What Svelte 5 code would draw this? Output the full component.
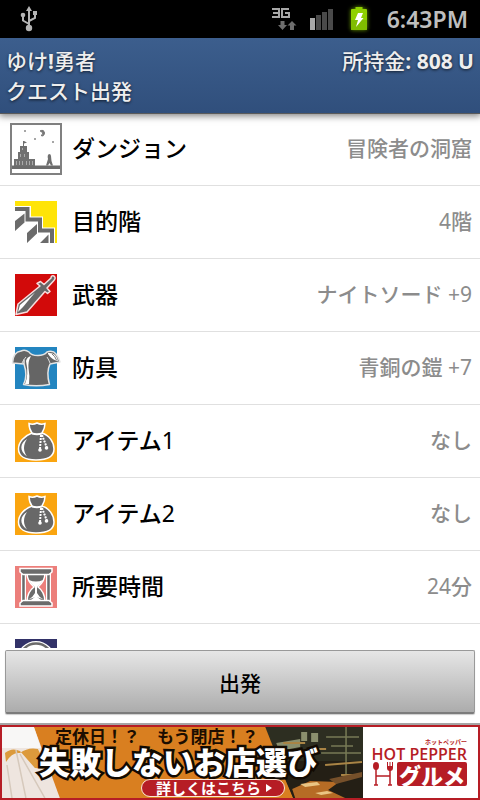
<script>
  let money = 808;

  let rows = [
    { icon: "dungeon", label: "ダンジョン", value: "冒険者の洞窟" },
    { icon: "stairs", label: "目的階", value: "4階" },
    { icon: "sword", label: "武器", value: "ナイトソード +9" },
    { icon: "armor", label: "防具", value: "青銅の鎧 +7" },
    { icon: "bag", label: "アイテム1", value: "なし" },
    { icon: "bag", label: "アイテム2", value: "なし" },
    { icon: "hourglass", label: "所要時間", value: "24分" },
    { icon: "clock", label: "", value: "" },
  ];

  const tiles = {
    stairs: "#ffe408",
    sword: "#d20a0a",
    armor: "#2385c0",
    bag: "#faa510",
    hourglass: "#ec7f7b",
    clock: "#323268",
  };

  // odd parts are the latin runs, they are set lighter than the kana and kanji
  function parts(text) {
    return text.split(/([ -~]+)/);
  }
</script>

{#snippet mixed(text)}
  {#each parts(text) as part, i}{#if i % 2}<span class="latin">{part}</span>{:else}{part}{/if}{/each}
{/snippet}

<div class="screen">
  <div class="status">
    <svg class="usb" width="18" height="26" viewBox="0 0 18 26">
      <path d="M9 3V22M9 18L3 14.500V9M9 15L15 12V7" fill="none" stroke="#b4b4b4" stroke-width="2" />
      <path d="M9 0L12 5H6Z" fill="#b4b4b4" />
      <circle cx="9" cy="22" r="3.200" fill="#b4b4b4" />
      <circle cx="3" cy="9" r="2.300" fill="#b4b4b4" />
      <rect x="13" y="5" width="4" height="4" fill="#b4b4b4" />
    </svg>
    <svg width="26" height="24" viewBox="0 0 26 24">
      <path d="M1 2H8V10H1M2 6H8M18 2H11V10H18V6H14" fill="none" stroke="#a8a8a8" stroke-width="2" />
      <path d="M9.500 14H13.500V18H16L11.500 23L7 18H9.500Z" fill="#6e6e6e" />
      <path d="M19 23H23V18.500H25.500L21 14L16.500 18.500H19Z" fill="#6e6e6e" />
    </svg>
    <svg class="signal" width="24" height="22" viewBox="0 0 24 22">
      <rect x="0" y="10" width="5" height="12" fill="#a9a9a9" />
      <rect x="6" y="7" width="5" height="15" fill="#4a4a4a" />
      <rect x="12" y="4" width="5" height="18" fill="#4a4a4a" />
      <rect x="18" y="1" width="5" height="21" fill="#4a4a4a" />
    </svg>
    <svg class="battery" width="18" height="24" viewBox="0 0 18 24">
      <path d="M1 3Q1 2 2 2H5.500V0H12.500V2H16Q17 2 17 3V22Q17 23 16 23H2Q1 23 1 22Z" fill="#8fd000" />
      <path d="M1 13H17V22Q17 23 16 23H2Q1 23 1 22Z" fill="#80bd00" />
      <path d="M8 6H13L11 11H13.500L6 20L8 13H5Z" fill="#fff" />
    </svg>
    <span class="clock">6:43PM</span>
  </div>

  <header>
    <h1>ゆけ<b>!</b>勇者<br />クエスト出発</h1>
    <div class="money">所持金<b>: {money} U</b></div>
  </header>

  <ul>
    {#each rows as row}
      <li>
        <svg width="52" height="52" viewBox="0 0 52 52">
          {#if tiles[row.icon]}
            <rect x="5" y="5" width="42" height="42" fill={tiles[row.icon]} />
          {/if}
          {#if row.icon === "dungeon"}
            <rect x="1" y="1" width="50" height="50" fill="#fff" stroke="#808080" stroke-width="2" />
            <path d="M2 42.500H50V46H2Z" fill="#6b6b6b" />
            <path d="M4 36H8V29H10V23H13V18H14V23H17V29H19V36H25V43H4Z" fill="#707070" />
            <path d="M14 18L17 19.500L14 20.500Z" fill="#707070" />
            <path d="M6.500 38V42M9.500 38V42M12.500 38V42M16.500 38V42M19.500 38V42M22.500 38V42M10.500 31V34M14.500 31V34M12.500 25V27" stroke="#aaa" />
            <path d="M39 31Q41 31 41 33L41.500 38L43 42.500H41L39.500 40L38 42.500H36L38 36Q37 32 39 31Z" fill="#707070" />
            <path d="M30 8Q34 6 34.500 10Q34 14 31 12.500Q34 11 32 9Q31 8 30 8Z" fill="#777" stroke="#777" />
            <circle cx="15" cy="8" r="1" fill="#888" />
            <circle cx="25" cy="16" r="1" fill="#888" />
            <circle cx="43" cy="19" r="1" fill="#888" />
          {:else if row.icon === "stairs"}
            <path d="M5 10H21V20.500H33V31.500H45V47H5Z" fill="#fff" />
            <path d="M5 13H17.500V23.500H30V34.500H42V47" fill="none" stroke="#6b6b6b" stroke-width="4" />
            <path d="M5 25L14.500 17.500V26.500L5 35ZM17 37L27 28V37.500L17 47ZM30 47L38.500 38.500V47Z" fill="#6b6b6b" />
          {:else if row.icon === "sword"}
            <path
              d="M6 45.500L8 35L30 17L27 14.500L30.500 12.500L34 15.500L41 9Q41 6 44 7Q46.500 9 43.500 12L37 19L40 22.500L37.500 24.500L35 22.500L17 43Z"
              fill="#686868" stroke="#f8dede" stroke-width="1.500" stroke-linejoin="round"
            />
            <path d="M8 43L10 36L25 23.500L13 38Z" fill="#fff" />
          {:else if row.icon === "armor"}
            <path
              d="M14 18V22L2.500 21Q3 10 11 9Q15 7 19 10Q21 13.500 28 13.500Q34 13.500 37 10Q43 8 46 12Q49 16 50 20L40 22Q36 30 39.500 42.500Q26 45 13.500 42.500Q18 34 14 22Z"
              fill="#656565" stroke="#e4e4e4" stroke-width="1.500" stroke-linejoin="round"
            />
            <path d="M16 19Q17 15 21 14Q18 19 18.500 26Q20 34 19 42H15Q19 33 16 19Z" fill="#fff" />
            <path d="M38 11Q46 10 48 19Q42 18 38 12Z" fill="#fff" />
            <path d="M42 12Q45 14 46.500 18" stroke="#777" fill="none" />
            <path d="M12 21Q14 17 16 15M37 15Q39 18 40 21" stroke="#ddd" fill="none" />
          {:else if row.icon === "bag"}
            <path
              d="M19 8.500Q23 10 27 8Q31 10 35 8.500Q35 13 32 18C39 20 44 27 44 34C44 42 37 45 26 45C15 45 8.500 41 8.500 34C8.500 27 14 21 22 18Q19 14 19 8.500Z"
              fill="#686868" stroke="#fff" stroke-width="1.500"
            />
            <path d="M22 18.500Q27 20 32 18.500" stroke="#fff" stroke-width="2" fill="none" />
            <path d="M17 24C10 28 9 36 17 41.500C13 36 13 30 17 24Z" fill="#fff" />
            <path d="M31 20L30 34M32 20L37 33" stroke="#fff" stroke-width="2" stroke-dasharray="2 1" />
            <circle cx="30" cy="35" r="1.800" fill="#fff" />
            <circle cx="36.500" cy="33" r="1.800" fill="#fff" />
          {:else if row.icon === "hourglass"}
            <path d="M13.500 12V41M38.500 12V41" stroke="#fff" stroke-width="5" />
            <path d="M13.500 12V41M38.500 12V41" stroke="#6b6b6b" stroke-width="2.500" />
            <path d="M17 12H35Q35 20 28 26Q35 31 35 41H17Q17 31 24 26Q17 20 17 12Z" fill="#6b6b6b" stroke="#fff" stroke-width="1.500" />
            <path d="M19 19Q26 22 33 19Q31 23 27 26V32Q29 36 33 38Q26 36 26 36Q26 36 19 38Q23 36 25 32V26Q21 23 19 19Z" fill="#fff" />
            <path d="M26 35L31 39H21Z" fill="#fff" />
            <path d="M10 7.500H42V11L39 13.500H13L10 11ZM13 39.500H39L42 42V45H10V42Z" fill="#6b6b6b" stroke="#fff" stroke-width="1.500" />
          {:else if row.icon === "clock"}
            <circle cx="26" cy="26" r="17" fill="#fff" stroke="#fff" stroke-width="4" />
            <circle cx="26" cy="26" r="16.500" fill="none" stroke="#6b6b6b" stroke-width="2.500" />
            <path d="M26 16V27H33" fill="none" stroke="#6b6b6b" stroke-width="2" />
          {/if}
        </svg>
        <span class="label">{@render mixed(row.label)}</span>
        <span class="value">{@render mixed(row.value)}</span>
      </li>
    {/each}
  </ul>

  <div class="actions">
    <button>出発</button>
  </div>

  <a class="ad" href="#gourmet">
    <span class="copy">
      <svg class="art" viewBox="0 0 362 71" preserveAspectRatio="none">
        <rect width="362" height="71" fill="#d97f20" />
        <path d="M0 0H32L58 71H0Z" fill="#eee5df" />
        <path d="M0 0H32L39 21H0Z" fill="#f8f7f6" />
        <path d="M3 26Q10 20 18 24L33 41L46 42L36 22Q26 20 18 26Q10 25 4 35Z" fill="#dc9a3c" />
        <path d="M14 23L24 71M18 27L43 71M5 38L10 71" stroke="#d6c9bc" stroke-width="1.500" fill="none" />
        <path d="M264 0H362V71H292Z" fill="#2d2e21" />
        <path d="M276 34H362V71H292Z" fill="#241f15" />
        <path d="M275 16L299 12V20L278 24ZM300 5H306V14H300ZM310 6H317V15H310Z" fill="#8b8f6d" />
        <path d="M345 0V49M325 10H358M330 19H352M320 26H360" stroke="#777a55" stroke-width="1.500" />
        <path d="M282 16H304M309 22H325M324 38L361 35M340 48H360" stroke="#a98445" stroke-width="2" />
        <path d="M291 62L309 54L338 55L327 63L344 71H294Z" fill="#b66c25" />
        <path d="M299 57L316 55L319 58L304 60ZM314 66L326 64L332 66L320 68Z" fill="#eac584" />
        <path d="M328 52L361 45V50L335 57Z" fill="#76502a" />
      </svg>
      <span class="lead">定休日！？　もう閉店！？</span>
      <span class="headline">失敗しないお店選び</span>
      <span class="more">詳しくはこちら<svg width="6" height="8" viewBox="0 0 6 8"><path d="M0 0L6 4L0 8Z" fill="#fff" /></svg></span>
    </span>
    <span class="brand">
      <span class="ruby">ホットペッパー</span>
      <span class="name">HOT PEPPER</span>
      <span class="gourmet">
        <svg width="20" height="24" viewBox="0 0 20 24">
          <ellipse cx="3" cy="4" rx="3" ry="4" fill="#b61d25" />
          <path d="M3 6V23M17 8V23M3 14H17M1 23H5M15 23H19" stroke="#b61d25" stroke-width="1.500" />
          <path d="M14 0H15V4H16.500V0H17.500V4H19V0H20V6Q20 9 17 9Q14 9 14 6Z" fill="#b61d25" />
        </svg>
        <span class="box">グルメ</span>
      </span>
    </span>
  </a>
</div>

<style>
  :global(body) {
    margin: 0;
    background: #fff;
  }
  .screen {
    display: flex;
    flex-direction: column;
    height: 100vh;
    overflow: hidden;
    font-family: "Noto Sans", "Noto Sans CJK JP", sans-serif;
    color: #000;
  }
  .status {
    display: flex;
    align-items: center;
    flex: none;
    height: 38px;
    padding: 0 12px 0 20px;
    background: #000;
  }
  .usb {
    margin-right: auto;
  }
  .signal {
    margin-left: 13px;
  }
  .battery {
    margin: 0 19px 0 16px;
    filter: drop-shadow(0 0 2px #6a9c00);
  }
  .clock {
    color: #bebebe;
    font-size: 23px;
    font-weight: 600;
    line-height: 38px;
  }
  header {
    display: flex;
    justify-content: space-between;
    flex: none;
    box-sizing: border-box;
    height: 75px;
    padding: 8px 6px 7px;
    background: linear-gradient(#3c5e8d, #304f7c);
    box-shadow: 0 1px 0 #5a5a5a, 0 2px 7px 1px rgba(0, 0, 0, 0.5);
    color: #eee;
    font-size: 21px;
    line-height: 30px;
    text-shadow: 0 1px 3px rgba(0, 0, 0, 0.7);
    position: relative;
    z-index: 1;
  }
  h1 {
    margin: 0;
    font-size: 21px;
    font-weight: 500;
  }
  .money {
    font-weight: 500;
  }
  .money b {
    font-family: "Open Sans", sans-serif;
  }
  ul {
    flex: 1;
    min-height: 0;
    margin: 0;
    padding: 0;
    overflow: hidden;
    list-style: none;
  }
  li {
    display: flex;
    align-items: center;
    height: 72px;
    padding: 0 8px 0 10px;
    border-bottom: 1px solid #e0e0e0;
  }
  .label,
  .value {
    padding-bottom: 4px;
    font-weight: 500;
    white-space: pre;
  }
  .label {
    margin-left: 10px;
    font-size: 23px;
  }
  .value {
    margin-left: auto;
    color: #8c8c8c;
    font-size: 21px;
  }
  .latin {
    font-weight: 400;
  }
  .actions {
    flex: none;
    padding: 2px 5px 11px;
  }
  button {
    display: block;
    width: 100%;
    height: 64px;
    border: 1px solid #999;
    border-bottom: 2px solid #7c7c7c;
    border-radius: 2px;
    background: linear-gradient(#e6e6e6, #acacac);
    box-shadow: 0 1px 1px #ccc;
    color: #000;
    font: 500 21px "Noto Sans", "Noto Sans CJK JP", sans-serif;
    cursor: pointer;
  }
  .ad {
    display: flex;
    flex: none;
    box-sizing: border-box;
    height: 75px;
    border: 2px solid #b61d25;
    outline: 2px solid #a5a5a5;
    background: #fff;
    font-family: "Noto Sans CJK JP", sans-serif;
    text-decoration: none;
  }
  .copy {
    display: flex;
    flex: 1;
    flex-direction: column;
    align-items: flex-start;
    position: relative;
    color: #1c0d00;
    white-space: nowrap;
  }
  .art {
    position: absolute;
    width: 100%;
    height: 100%;
  }
  .lead,
  .headline,
  .more {
    position: relative;
  }
  .lead {
    margin-left: 53px;
    font-size: 17px;
    font-weight: 700;
    line-height: 18px;
  }
  .headline {
    margin-left: 37px;
    color: #fff;
    font-size: 31px;
    font-weight: 900;
    line-height: 32px;
    -webkit-text-stroke: 5px #120a02;
    paint-order: stroke fill;
  }
  .more {
    display: flex;
    align-items: center;
    gap: 5px;
    margin: 2px 0 0 139px;
    padding: 0 12px 0 14px;
    border: 1px solid #fbe6d5;
    border-radius: 9px;
    background: #b61d25;
    color: #fff;
    font-size: 15px;
    font-weight: 700;
    line-height: 16px;
  }
  .brand {
    display: flex;
    flex: none;
    flex-direction: column;
    align-items: flex-end;
    box-sizing: border-box;
    width: 115px;
    padding: 11px 11px 0 0;
    color: #b61d25;
  }
  .ruby {
    font-size: 6px;
    font-weight: 700;
    line-height: 8px;
  }
  .name {
    font: 600 16px/16px "Open Sans", sans-serif;
  }
  .gourmet {
    display: flex;
    gap: 4px;
  }
  .box {
    padding: 0 2px;
    border-radius: 2px;
    background: #b61d25;
    color: #fff;
    font-size: 22px;
    font-weight: 900;
    line-height: 24px;
  }
</style>
